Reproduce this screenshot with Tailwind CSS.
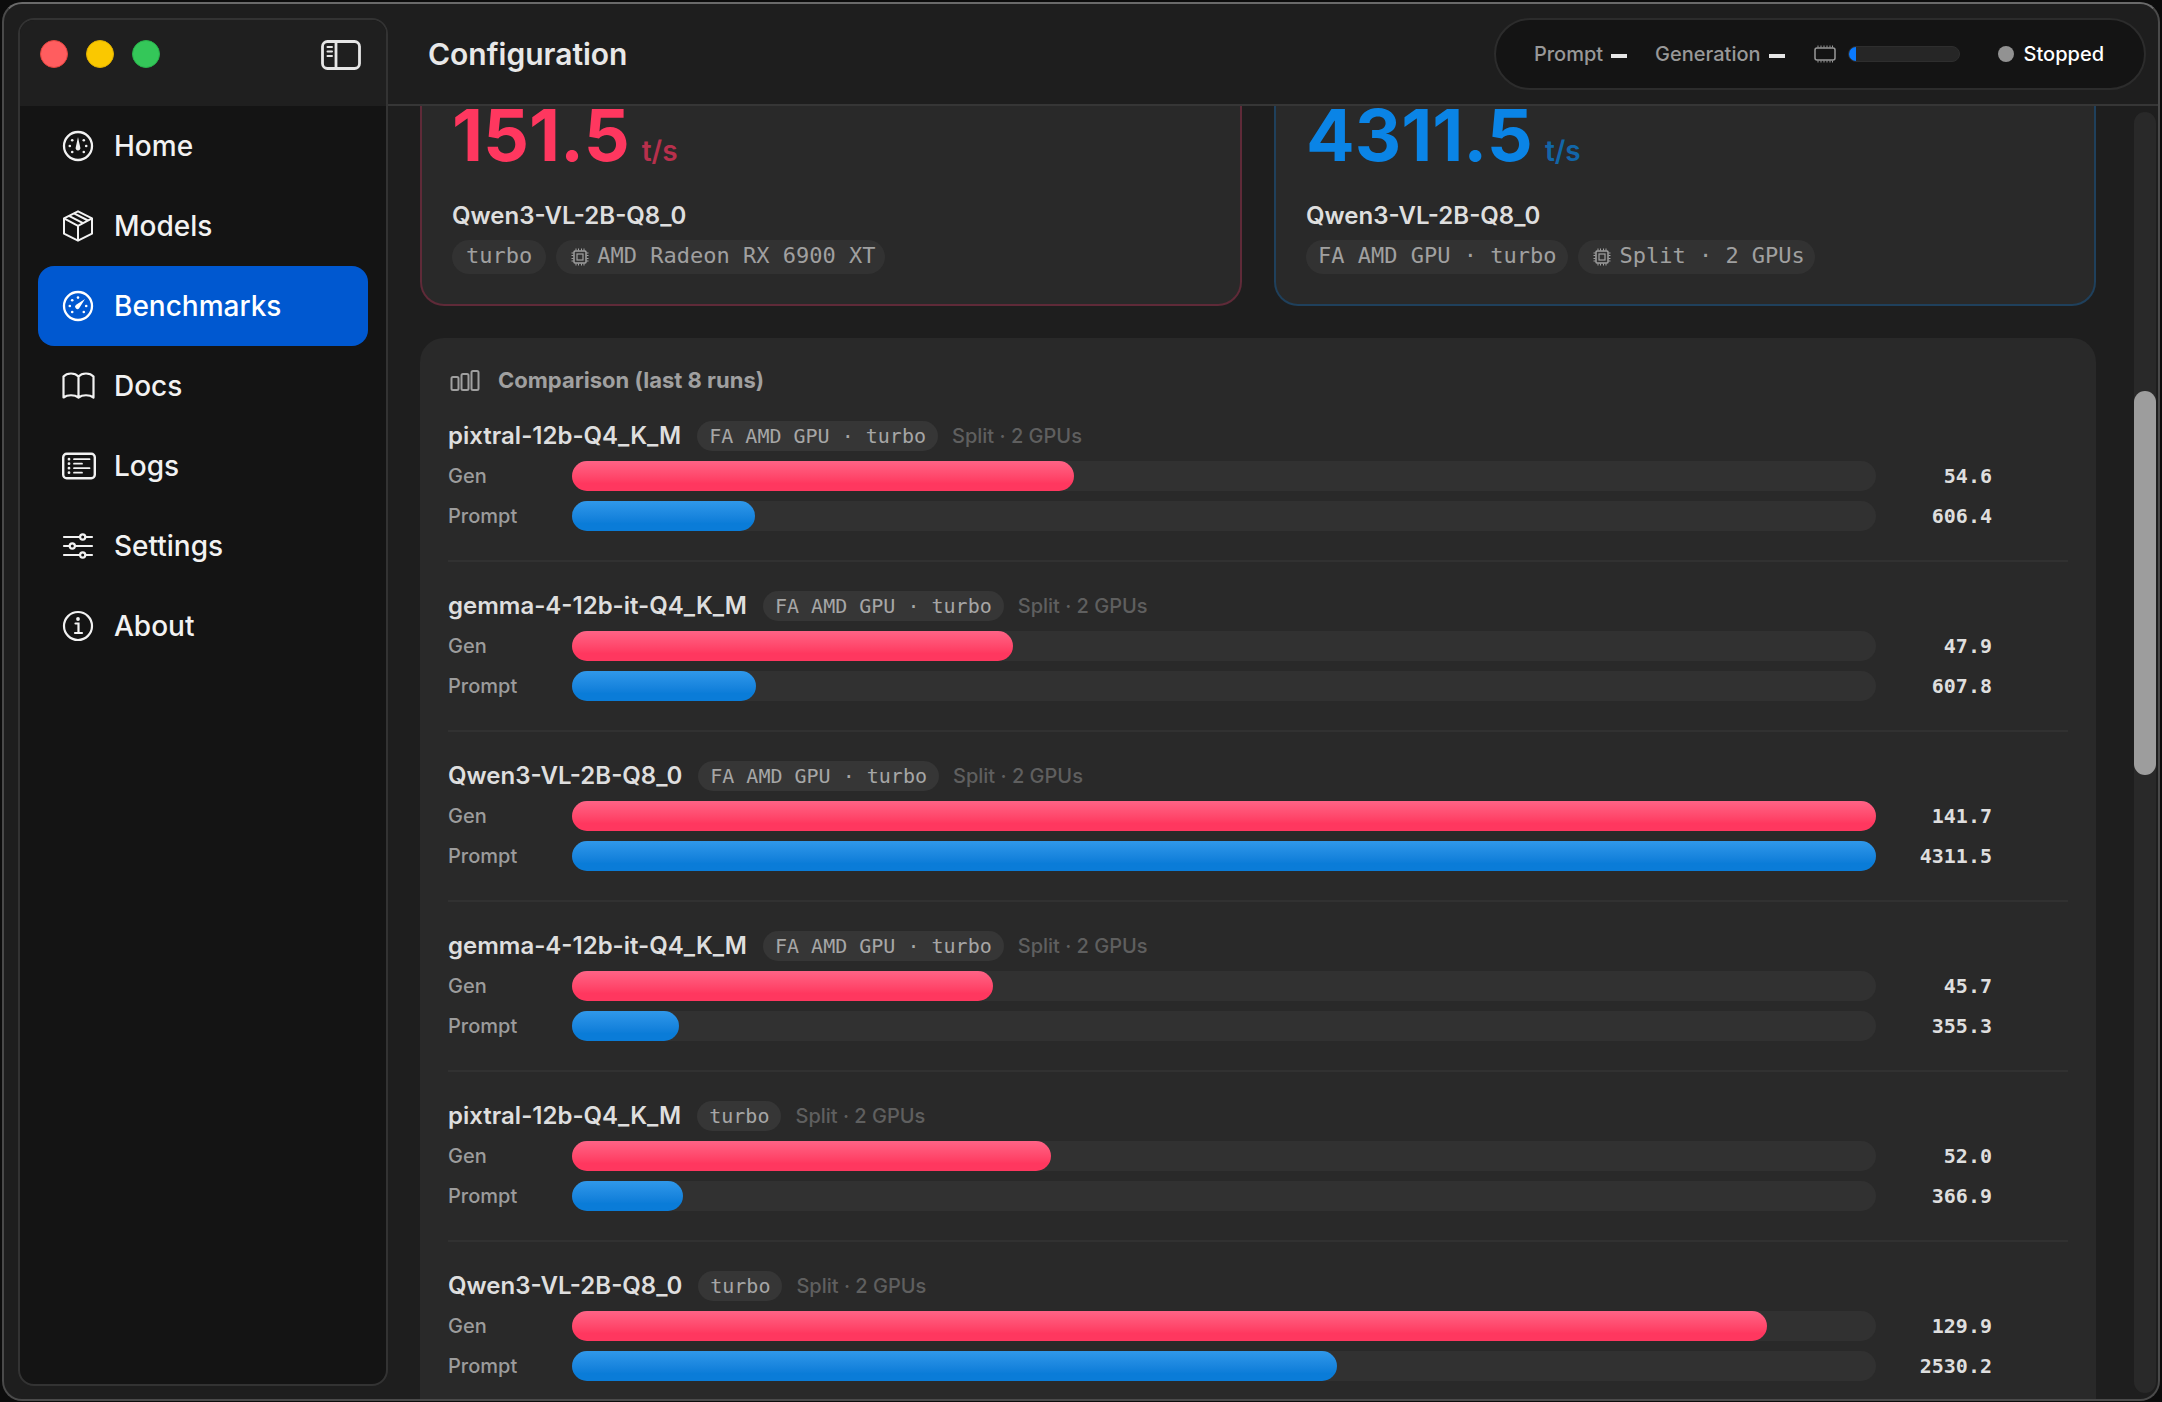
<!DOCTYPE html>
<html lang="en">
<head>
    <meta charset="UTF-8">
    <meta name="viewport" content="width=device-width, initial-scale=1.0">
    <title>Configuration</title>
    <script src="https://cdn.jsdelivr.net/npm/@tailwindcss/browser@4"></script>
</head>
<body class="bg-[#0c0c0c] font-['Inter','Liberation_Sans',sans-serif] text-[#dedede]">
    <div class="h-screen p-[2px] pb-px">
        <div class="h-full flex border-2 border-[#4a4a4a] border-t-[#6a6a6a] rounded-[20px] bg-[#1e1e1e] overflow-hidden">

            <!-- Sidebar -->
            <aside class="w-[370px] shrink-0 ml-[14px] mt-[14px] mb-[13px] border-2 border-[#333333] rounded-2xl bg-[#141414] overflow-hidden">
                <div class="h-[86px] bg-[#1f1f1f] flex items-start justify-between pl-5 pr-[25px] pt-5">
                    <div class="flex gap-[18px]">
                        <button aria-label="Close" class="size-7 rounded-full bg-[#ff5d5f] border border-[#e0443e]"></button>
                        <button aria-label="Minimize" class="size-7 rounded-full bg-[#fac800] border border-[#e0b000]"></button>
                        <button aria-label="Zoom" class="size-7 rounded-full bg-[#34c759] border border-[#28b14a]"></button>
                    </div>
                    <button aria-label="Toggle sidebar" class="text-[#e6e6e6]">
                        <svg class="w-10 h-[30px]" viewBox="0 0 40 30" fill="none" stroke="currentColor" stroke-width="2.800">
                            <rect x="1.500" y="1.500" width="37" height="27" rx="5"/>
                            <path d="M15 2v26"/>
                            <path d="M6.500 7h4.500M6.500 11.500h4.500M6.500 16h4.500" stroke-width="2" stroke-linecap="round"/>
                        </svg>
                    </button>
                </div>
                <nav class="px-[18px] text-[28px] font-medium text-[#f2f2f2]">
                    <a href="#" class="h-20 flex items-center gap-[18px] pl-6 rounded-2xl">
                        <svg class="w-[34px] h-8 shrink-0" viewBox="0 0 34 32" fill="none" stroke="currentColor" stroke-width="2.300">
                            <circle cx="16" cy="16" r="14"/>
                            <path d="M16 7l-2.300 10.500a2.400 2.400 0 1 0 4.600 0z" fill="currentColor" stroke="none"/>
                            <g fill="currentColor" stroke="none">
                                <circle cx="10.200" cy="10.200" r="1.300"/><circle cx="21.800" cy="10.200" r="1.300"/>
                                <circle cx="7.800" cy="16" r="1.300"/><circle cx="24.200" cy="16" r="1.300"/>
                                <circle cx="10.200" cy="22" r="1.300"/><circle cx="21.800" cy="22" r="1.300"/>
                            </g>
                        </svg>
                        Home
                    </a>
                    <a href="#" class="h-20 flex items-center gap-[18px] pl-6 rounded-2xl">
                        <svg class="w-[34px] h-8 shrink-0" viewBox="0 0 34 32" fill="none" stroke="currentColor" stroke-width="2" stroke-linejoin="round">
                            <path d="M16 1.300l14 7v15.400l-14 7-14-7V8.300z"/>
                            <path d="M2 8.300l14 7.500 14-7.500M16 15.800v14.900M7 5.800l14 7.400M12 3.300l14 7.200"/>
                        </svg>
                        Models
                    </a>
                    <a href="#" aria-current="page" class="h-20 flex items-center gap-[18px] pl-6 rounded-2xl bg-[#0058d0] text-white">
                        <svg class="w-[34px] h-8 shrink-0" viewBox="0 0 34 32" fill="none" stroke="currentColor" stroke-width="2.300">
                            <circle cx="16" cy="16" r="14"/>
                            <path d="M23 9l-9.200 5.900a2.400 2.400 0 1 0 3.400 3.400z" fill="currentColor" stroke="none"/>
                            <g fill="currentColor" stroke="none">
                                <circle cx="10.200" cy="10.200" r="1.300"/><circle cx="16" cy="7.600" r="1.300"/>
                                <circle cx="7.800" cy="16" r="1.300"/><circle cx="24.200" cy="16" r="1.300"/>
                                <circle cx="10.200" cy="22" r="1.300"/><circle cx="21.800" cy="22" r="1.300"/>
                            </g>
                        </svg>
                        Benchmarks
                    </a>
                    <a href="#" class="h-20 flex items-center gap-[18px] pl-6 rounded-2xl">
                        <svg class="w-[34px] h-8 shrink-0" viewBox="0 0 34 32" fill="none" stroke="currentColor" stroke-width="2.200" stroke-linejoin="round">
                            <path d="M16.500 6.500C13 2.500 5 2.500 1.500 6.500v21c4-3 11-3 15 0 4-3 11-3 15 0v-21c-3.500-4-11.500-4-15 0zv21"/>
                        </svg>
                        Docs
                    </a>
                    <a href="#" class="h-20 flex items-center gap-[18px] pl-6 rounded-2xl">
                        <svg class="w-[34px] h-8 shrink-0" viewBox="0 0 34 32" fill="none" stroke="currentColor" stroke-width="2.400" stroke-linecap="round">
                            <rect x="1.200" y="3.700" width="31.600" height="24.600" rx="3.500"/>
                            <path d="M12 9.200h15.500M12 13.700h8M12 18.200h15.500M12 22.700h8" stroke-width="1.800"/>
                            <path d="M7 9.200h.01M7 13.700h.01M7 18.200h.01M7 22.700h.01" stroke-width="2.800"/>
                        </svg>
                        Logs
                    </a>
                    <a href="#" class="h-20 flex items-center gap-[18px] pl-6 rounded-2xl">
                        <svg class="w-[34px] h-8 shrink-0" viewBox="0 0 34 32" fill="none" stroke="currentColor" stroke-width="2.200" stroke-linecap="round">
                            <path d="M2 7h15.500M24 7h6M2 16h5M13.500 16H30M2 25h15.500M24 25h6"/>
                            <circle cx="20.700" cy="7" r="2.600"/><circle cx="10.300" cy="16" r="2.600"/><circle cx="20.700" cy="25" r="2.600"/>
                        </svg>
                        Settings
                    </a>
                    <a href="#" class="h-20 flex items-center gap-[18px] pl-6 rounded-2xl">
                        <svg class="w-[34px] h-8 shrink-0" viewBox="0 0 34 32" fill="none" stroke="currentColor" stroke-width="2.200" stroke-linecap="round">
                            <circle cx="16" cy="16" r="14"/>
                            <path d="M13.500 13.500h3v9.500M13 23h7"/>
                            <circle cx="16" cy="9" r="1.900" fill="currentColor" stroke="none"/>
                        </svg>
                        About
                    </a>
                </nav>
            </aside>

            <div class="flex-1 min-w-0 flex flex-col">
                <!-- Header -->
                <header class="h-[102px] shrink-0 flex items-center justify-between pl-10 pr-3 border-b-2 border-[#363636]">
                    <h1 class="text-[30px] font-semibold text-[#e8e8e8]">Configuration</h1>
                    <div class="h-[72px] flex items-center pl-[38px] pr-10 border-2 border-[#2c2c2c] rounded-full bg-[#141414] text-[20px] font-medium text-[#989898]">
                        <span>Prompt</span>
                        <span class="w-4 h-1 ml-2 mt-1 bg-[#e6e6e6]"></span>
                        <span class="ml-7">Generation</span>
                        <span class="w-4 h-1 ml-2 mt-1 bg-[#e6e6e6]"></span>
                        <svg class="w-[22px] h-[18px] ml-[29px]" viewBox="0 0 22 18" fill="none" stroke="currentColor">
                            <rect x="1" y="3" width="20" height="12" rx="2" stroke-width="1.500"/>
                            <path d="M4 .5v2M7 .5v2M10 .5v2M13 .5v2M16 .5v2M18.500 .5v2M4 15.500v2M7 15.500v2M10 15.500v2M13 15.500v2M16 15.500v2M18.500 15.500v2"/>
                        </svg>
                        <div class="w-28 h-4 ml-3 rounded-full bg-[#262626] border border-[#2e2e2e] overflow-hidden">
                            <div class="h-full bg-[#0a7aff]" style="width: 7%"></div>
                        </div>
                        <span class="size-4 ml-[38px] rounded-full bg-[#929292]"></span>
                        <span class="ml-[10px] text-white">Stopped</span>
                    </div>
                </header>

                <div class="flex-1 min-h-0 flex justify-between pl-8 pr-[2px]">
                    <main class="flex-1 min-w-0 overflow-hidden">
                        <!-- Best results -->
                        <div class="grid grid-cols-2 gap-8">
                            <section class="h-[200px] px-[30px] border-2 border-t-0 border-[#5f2a38] rounded-b-3xl bg-[#292929]">
                                <div class="h-[88px] flex items-baseline gap-3 text-[#ff375f]">
                                    <span class="text-[72px] leading-[58px] font-bold">151.5</span>
                                    <span class="text-[28px] font-semibold text-[#b7304c]">t/s</span>
                                </div>
                                <h2 class="h-[46px] leading-[44px] text-[24px] font-semibold">Qwen3-VL-2B-Q8_0</h2>
                                <div class="flex gap-[10px] font-['DejaVu_Sans_Mono',monospace] text-[22px] leading-8 text-[#a0a0a0]">
                                    <span class="h-[34px] px-[14px] rounded-full bg-[#323232]">turbo</span>
                                    <span class="h-[34px] pl-[15px] pr-[10px] flex gap-2 rounded-full bg-[#323232]">
                                        <svg class="size-[18px] mt-2" viewBox="0 0 18 18" fill="none" stroke="currentColor">
                                            <rect x="3" y="3" width="12" height="12" rx="1" stroke-width="1.500"/>
                                            <rect x="6" y="6" width="6" height="6" stroke-width="1.200"/>
                                            <path d="M5 .5v2M7.500 .5v2M10.500 .5v2M13 .5v2M5 15.500v2M7.500 15.500v2M10.500 15.500v2M13 15.500v2M.5 5h2M.5 7.500h2M.5 10.500h2M.5 13h2M15.500 5h2M15.500 7.500h2M15.500 10.500h2M15.500 13h2"/>
                                        </svg>
                                        AMD Radeon RX 6900 XT
                                    </span>
                                </div>
                            </section>
                            <section class="h-[200px] px-[30px] border-2 border-t-0 border-[#1f405c] rounded-b-3xl bg-[#292929]">
                                <div class="h-[88px] flex items-baseline gap-3 text-[#0a84e6]">
                                    <span class="text-[72px] leading-[58px] font-bold">4311.5</span>
                                    <span class="text-[28px] font-semibold text-[#1266a8]">t/s</span>
                                </div>
                                <h2 class="h-[46px] leading-[44px] text-[24px] font-semibold">Qwen3-VL-2B-Q8_0</h2>
                                <div class="flex gap-[10px] font-['DejaVu_Sans_Mono',monospace] text-[22px] leading-8 text-[#a0a0a0]">
                                    <span class="h-[34px] px-3 rounded-full bg-[#323232]">FA AMD GPU · turbo</span>
                                    <span class="h-[34px] pl-[15px] pr-[10px] flex gap-2 rounded-full bg-[#323232]">
                                        <svg class="size-[18px] mt-2" viewBox="0 0 18 18" fill="none" stroke="currentColor">
                                            <rect x="3" y="3" width="12" height="12" rx="1" stroke-width="1.500"/>
                                            <rect x="6" y="6" width="6" height="6" stroke-width="1.200"/>
                                            <path d="M5 .5v2M7.500 .5v2M10.500 .5v2M13 .5v2M5 15.500v2M7.500 15.500v2M10.500 15.500v2M13 15.500v2M.5 5h2M.5 7.500h2M.5 10.500h2M.5 13h2M15.500 5h2M15.500 7.500h2M15.500 10.500h2M15.500 13h2"/>
                                        </svg>
                                        Split · 2 GPUs
                                    </span>
                                </div>
                            </section>
                        </div>

                        <!-- Comparison -->
                        <section class="mt-8 px-7 pt-7 rounded-t-3xl bg-[#292929]">
                            <h2 class="h-7 flex items-center gap-[18px] pl-[2px] text-[22px] font-bold text-[#a0a0a0]">
                                <svg class="w-[30px] h-6" viewBox="0 0 30 24" fill="none" stroke="currentColor" stroke-width="2">
                                    <rect x="1.500" y="9" width="7" height="13" rx="1.500"/>
                                    <rect x="11.500" y="6" width="7" height="16" rx="1.500"/>
                                    <rect x="21.500" y="3" width="7" height="19" rx="1.500"/>
                                </svg>
                                Comparison (last 8 runs)
                            </h2>
                            <div id="runs" class="mt-[27px] divide-y-2 divide-[#313131]"></div>
                        </section>
                    </main>

                    <!-- Scrollbar -->
                    <div class="w-[22px] shrink-0 ml-[38px] mt-[6px] mb-[6px] rounded-full bg-[#292929]">
                        <div class="h-[384px] mt-[279px] rounded-full bg-[#9d9d9d]"></div>
                    </div>
                </div>
            </div>
        </div>
    </div>

    <script>
        const runs = [
            { model: 'pixtral-12b-Q4_K_M', tag: 'FA AMD GPU · turbo', gen: 54.6, prompt: 606.4 },
            { model: 'gemma-4-12b-it-Q4_K_M', tag: 'FA AMD GPU · turbo', gen: 47.9, prompt: 607.8 },
            { model: 'Qwen3-VL-2B-Q8_0', tag: 'FA AMD GPU · turbo', gen: 141.7, prompt: 4311.5 },
            { model: 'gemma-4-12b-it-Q4_K_M', tag: 'FA AMD GPU · turbo', gen: 45.7, prompt: 355.3 },
            { model: 'pixtral-12b-Q4_K_M', tag: 'turbo', gen: 52.0, prompt: 366.9 },
            { model: 'Qwen3-VL-2B-Q8_0', tag: 'turbo', gen: 129.9, prompt: 2530.2 }
        ];
        const maxGen = Math.max(...runs.map(r => r.gen));
        const maxPrompt = Math.max(...runs.map(r => r.prompt));

        const bar = (label, value, max, color) => `
            <div class="h-[30px] mt-[10px] flex items-center pr-[76px] text-[20px]">
                <span class="w-[124px] shrink-0 font-medium text-[#9c9c9c]">${label}</span>
                <div class="flex-1 h-[30px] rounded-full bg-[#313131]">
                    <div class="h-full rounded-full bg-linear-to-b ${color}" style="width: ${value / max * 100}%"></div>
                </div>
                <span class="w-[116px] shrink-0 text-right font-['DejaVu_Sans_Mono',monospace] font-bold">${value.toFixed(1)}</span>
            </div>`;

        document.getElementById('runs').innerHTML = runs.map(r => `
            <div class="pb-[29px] mb-[29px]">
                <div class="h-[30px] flex items-center">
                    <h3 class="text-[24px] font-semibold">${r.model}</h3>
                    <span class="h-[30px] ml-4 px-3 flex items-center rounded-full bg-[#363636] font-['DejaVu_Sans_Mono',monospace] text-[20px] text-[#a6a6a6]">${r.tag}</span>
                    <span class="ml-[14px] text-[20px] font-medium text-[#5f5f5f]">Split · 2 GPUs</span>
                </div>
                ${bar('Gen', r.gen, maxGen, 'from-[#ff6386] to-[#ff375f] to-75%')}
                ${bar('Prompt', r.prompt, maxPrompt, 'from-[#2f98ea] to-[#0a7cd8] to-75%')}
            </div>`).join('');
    </script>
</body>
</html>
